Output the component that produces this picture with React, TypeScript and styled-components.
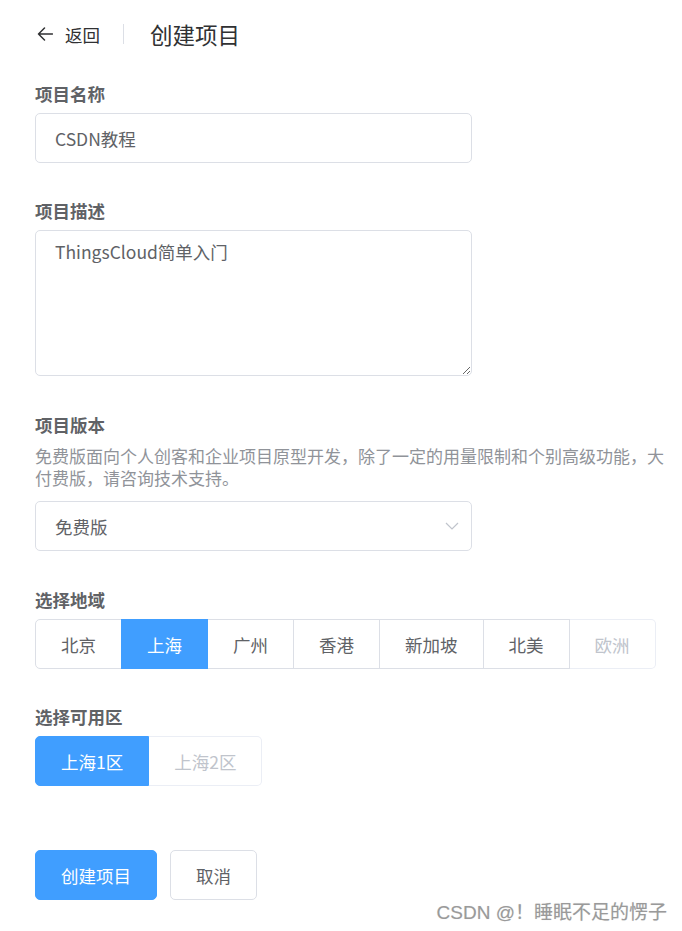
import React from "react";
import styled, { createGlobalStyle } from "styled-components";

const GlobalStyle = createGlobalStyle`
  html, body {
    margin: 0;
    padding: 0;
    background: #fff;
    overflow: hidden;
  }
  body {
    font-family: "Noto Sans CJK SC", "Noto Sans", sans-serif;
    color: #606266;
  }
`;

const Page = styled.div`
  position: relative;
  height: 931px;
  padding: 0 0 0 35px;
  box-sizing: border-box;
  overflow: hidden;
`;

const Header = styled.div`
  display: flex;
  align-items: center;
  height: 68px;
  color: #303133;
`;

const Back = styled.div`
  display: flex;
  align-items: center;
  gap: 12px;
  font-size: 17.5px;
  cursor: pointer;
  svg {
    margin-left: 2px;
  }
`;

const Divider = styled.span`
  width: 1px;
  height: 20px;
  background: #dcdfe6;
  margin: 0 26px 0 23px;
`;

const Title = styled.div`
  font-size: 22.5px;
  line-height: 30px;
`;

const Form = styled.div`
  display: flex;
  flex-direction: column;
  padding-top: 15px;
`;

const Item = styled.div<{ $gap?: number }>`
  display: flex;
  flex-direction: column;
  margin-bottom: ${(p) => (p.$gap !== undefined ? p.$gap : 37)}px;
`;

const Label = styled.div`
  font-size: 17.5px;
  font-weight: 700;
  line-height: 22px;
  color: #606266;
  margin-bottom: 8px;
`;

const Desc = styled.div`
  display: flex;
  flex-direction: column;
  margin-top: 1px;
  margin-bottom: 12px;
`;

const DescLine = styled.span`
  font-size: 17px;
  line-height: 22px;
  height: 22px;
  color: #909399;
  white-space: nowrap;
`;

const TextInput = styled.input`
  width: 437px;
  height: 50px;
  box-sizing: border-box;
  border: 1px solid #dcdfe6;
  border-radius: 5px;
  padding: 0 19px;
  font-family: inherit;
  font-size: 17.5px;
  color: #606266;
  outline: none;
`;

const TextArea = styled.textarea`
  width: 437px;
  height: 146px;
  box-sizing: border-box;
  border: 1px solid #dcdfe6;
  border-radius: 5px;
  padding: 8px 19px;
  font-family: inherit;
  font-size: 17.5px;
  line-height: 26px;
  color: #606266;
  outline: none;
  resize: vertical;
`;

const Select = styled.div`
  width: 437px;
  height: 50px;
  box-sizing: border-box;
  border: 1px solid #dcdfe6;
  border-radius: 5px;
  padding: 0 12px 0 19px;
  display: flex;
  align-items: center;
  justify-content: space-between;
  font-size: 17.5px;
  color: #606266;
  cursor: pointer;
`;

const Group = styled.div`
  display: flex;
`;

const RadioButton = styled.div<{ $active?: boolean; $disabled?: boolean }>`
  height: 50px;
  box-sizing: border-box;
  padding: 0 25px;
  display: flex;
  align-items: center;
  justify-content: center;
  font-size: 17.5px;
  white-space: nowrap;
  border: 1px solid ${(p) => (p.$active ? "#409eff" : p.$disabled ? "#ebeef5" : "#dcdfe6")};
  border-left: 0;
  background: ${(p) => (p.$active ? "#409eff" : "#fff")};
  color: ${(p) => (p.$active ? "#fff" : p.$disabled ? "#c0c4cc" : "#606266")};
  box-shadow: ${(p) => (p.$active ? "-1px 0 0 0 #409eff" : "none")};
  cursor: ${(p) => (p.$disabled ? "not-allowed" : "pointer")};
  &:first-child {
    border-left: 1px solid ${(p) => (p.$active ? "#409eff" : "#dcdfe6")};
    border-radius: 5px 0 0 5px;
    box-shadow: none;
  }
  &:last-child {
    border-radius: 0 5px 5px 0;
  }
`;

const Actions = styled.div`
  display: flex;
  gap: 13px;
  margin-top: 64px;
`;

const Button = styled.button<{ $primary?: boolean }>`
  height: 50px;
  padding: 0 25px;
  box-sizing: border-box;
  border-radius: 5px;
  font-family: inherit;
  font-size: 17.5px;
  border: 1px solid ${(p) => (p.$primary ? "#409eff" : "#dcdfe6")};
  background: ${(p) => (p.$primary ? "#409eff" : "#fff")};
  color: ${(p) => (p.$primary ? "#fff" : "#606266")};
  cursor: pointer;
`;

const Watermark = styled.div`
  position: absolute;
  right: 15px;
  bottom: 6px;
  font-family: "Liberation Sans", "Noto Sans CJK SC", sans-serif;
  font-size: 19px;
  line-height: 24px;
  color: #9a9a9a;
  text-shadow: 0 0 1px rgba(0, 0, 0, 0.15);
`;

const regions = ["北京", "上海", "广州", "香港", "新加坡", "北美", "欧洲"];
const zones = ["上海1区", "上海2区"];

export default function App() {
  return (
    <Page>
      <GlobalStyle />
      <Header>
        <Back>
          <svg width="16" height="14" viewBox="0 0 16 14" fill="none">
            <path d="M15.5 7H1.5M7.5 1L1.5 7l6 6" stroke="#303133" strokeWidth="1.5" strokeLinecap="round" strokeLinejoin="round" />
          </svg>
          返回
        </Back>
        <Divider />
        <Title>创建项目</Title>
      </Header>
      <Form>
        <Item>
          <Label>项目名称</Label>
          <TextInput readOnly value="CSDN教程" />
        </Item>
        <Item $gap={38}>
          <Label>项目描述</Label>
          <TextArea readOnly value="ThingsCloud简单入门" />
        </Item>
        <Item $gap={38}>
          <Label>项目版本</Label>
          <Desc>
            <DescLine>免费版面向个人创客和企业项目原型开发，除了一定的用量限制和个别高级功能，大</DescLine>
            <DescLine>付费版，请咨询技术支持。</DescLine>
          </Desc>
          <Select>
            <span>免费版</span>
            <svg width="14" height="8" viewBox="0 0 14 8" fill="none">
              <path d="M1 1l6 6 6-6" stroke="#c0c4cc" strokeWidth="1.2" />
            </svg>
          </Select>
        </Item>
        <Item>
          <Label>选择地域</Label>
          <Group>
            {regions.map((r) => (
              <RadioButton key={r} $active={r === "上海"} $disabled={r === "欧洲"}>
                {r}
              </RadioButton>
            ))}
          </Group>
        </Item>
        <Item $gap={0}>
          <Label>选择可用区</Label>
          <Group>
            {zones.map((z, i) => (
              <RadioButton key={z} $active={i === 0} $disabled={i === 1}>
                {z}
              </RadioButton>
            ))}
          </Group>
        </Item>
        <Actions>
          <Button $primary>创建项目</Button>
          <Button>取消</Button>
        </Actions>
      </Form>
      <Watermark>CSDN @！睡眠不足的愣子</Watermark>
    </Page>
  );
}
